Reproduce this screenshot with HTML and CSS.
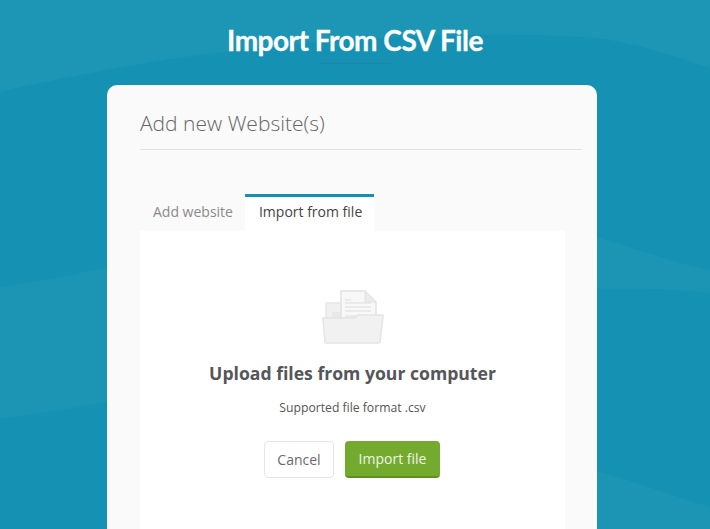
FILE: index.html
```html
<!DOCTYPE html>
<html lang="en">
<head>
    <meta charset="UTF-8">
    <meta name="viewport" content="width=device-width, initial-scale=1.0">
    <title>Import From CSV File</title>
    <link rel="stylesheet" href="styles.css">
</head>
<body>
    <svg class="waves" viewBox="0 0 710 529" preserveAspectRatio="none" aria-hidden="true">
        <path d="M0 0 H710 V68 C670 55 635 43 597 38 C460 28 300 42 200 55 C140 63 60 78 0 92 Z" fill="#1c96b4"/>
        <path d="M0 287 C40 282 75 274 107 267 V402 C75 408 40 414 0 418 Z" fill="#1b95b3"/>
        <path d="M597 237 C640 250 675 263 710 270 V293 C675 289 640 288 597 289 Z" fill="#1b95b3"/>
        <path d="M597 471 C640 483 675 497 710 507 V529 H597 Z" fill="#1b95b3"/>
    </svg>

    <div class="page">
        <h1>Import From CSV File</h1>
        <div class="title-rule"></div>

        <div class="card">
            <h2>Add new Website(s)</h2>

            <div class="tabs">
                <span class="tab">Add website</span>
                <span class="tab active">Import from file</span>
            </div>

            <div class="panel">
                <svg class="folder" viewBox="0 0 62 54" aria-hidden="true">
                    <path d="M4 13 H19 V28 H4 Z" fill="#f0f0f0" stroke="#e6e6e6" stroke-width="1.5"/>
                    <path d="M10 22 H19 V28 H10 Z" fill="#e8e8e8"/>
                    <path d="M19 1 H43 L54 12 V28 H19 Z" fill="#f8f8f8" stroke="#e2e2e2" stroke-width="1.5"/>
                    <path d="M43 1 V12 H54 Z" fill="#ebebeb" stroke="#e2e2e2" stroke-width="1"/>
                    <path d="M23 10 H29 M23 13 H49 M23 17 H49 M23 21 H49 M23 26 H49" stroke="#dcdcdc" stroke-width="1.2" fill="none"/>
                    <path d="M1 28 H33 L36 25 H60 C60.6 25 61 25.4 61 26 L58 52 C58 52.6 57.6 53 57 53 H4 C3.4 53 3 52.6 3 52 L1 29 Z" fill="#f1f1f1" stroke="#e4e4e4" stroke-width="1.5"/>
                </svg>
                <h3>Upload files from your computer</h3>
                <p>Supported file format .csv</p>
                <div class="actions">
                    <button class="btn btn-cancel">Cancel</button>
                    <button class="btn btn-import">Import file</button>
                </div>
            </div>
        </div>
    </div>
</body>
</html>
```

FILE: styles.css
```css
* {
    box-sizing: border-box;
    margin: 0;
    padding: 0;
}

html, body {
    height: 529px;
    overflow: hidden;
}

body {
    position: relative;
    font-family: "Open Sans", sans-serif;
    background-color: #1491b3;
}

.waves {
    position: absolute;
    top: 0;
    left: 0;
    width: 100%;
    height: 100%;
}

.page {
    position: relative;
    display: flex;
    flex-direction: column;
    align-items: center;
}

h1 {
    margin-top: 23px;
    font-family: Lato, sans-serif;
    font-size: 28px;
    line-height: 34px;
    font-weight: 700;
    letter-spacing: -0.5px;
    -webkit-text-stroke: 0.3px #fff;
    color: #fff;
}

.title-rule {
    width: 72px;
    height: 1px;
    margin-top: 6px;
    background-color: #2283a2;
}

.card {
    align-self: flex-start;
    width: 490px;
    height: 444px;
    margin: 21px 0 0 107px;
    padding: 0 15px 0 33px;
    background-color: #fafafa;
    border-radius: 10px 10px 0 0;
}

h2 {
    height: 65px;
    padding-top: 24px;
    font-size: 21px;
    line-height: 29px;
    font-weight: 300;
    color: #666;
    border-bottom: 1px solid #e2e2e2;
}

.tabs {
    display: flex;
    margin-top: 44px;
}

.tab {
    height: 37px;
    padding: 8px 12px 0 13px;
    font-size: 14px;
    line-height: 20px;
    color: #8a8a8a;
}

.tab.active {
    background-color: #fff;
    border-top: 3px solid #1390b2;
    padding: 5px 12px 0 14px;
    color: #444;
}

.panel {
    display: flex;
    flex-direction: column;
    align-items: center;
    width: 425px;
    height: 298px;
    padding-top: 59px;
    background-color: #fff;
}

.folder {
    width: 62px;
    height: 54px;
}

h3 {
    margin-top: 17px;
    font-size: 17.6px;
    line-height: 24px;
    font-weight: 700;
    color: #55565a;
}

.panel p {
    margin-top: 14px;
    font-size: 12.2px;
    line-height: 18px;
    color: #555;
}

.actions {
    display: flex;
    gap: 11px;
    margin: 24px 1px 0 0;
}

.btn {
    height: 37px;
    font-family: inherit;
    font-size: 14px;
    border-radius: 4px;
}

.btn-cancel {
    width: 70px;
    background-color: #fff;
    border: 1px solid #e6e6e6;
    color: #6a6a6e;
}

.btn-import {
    width: 95px;
    background-color: #74ab2f;
    border: none;
    border-bottom: 2px solid #5b8f1f;
    color: #eef5e4;
}
```
